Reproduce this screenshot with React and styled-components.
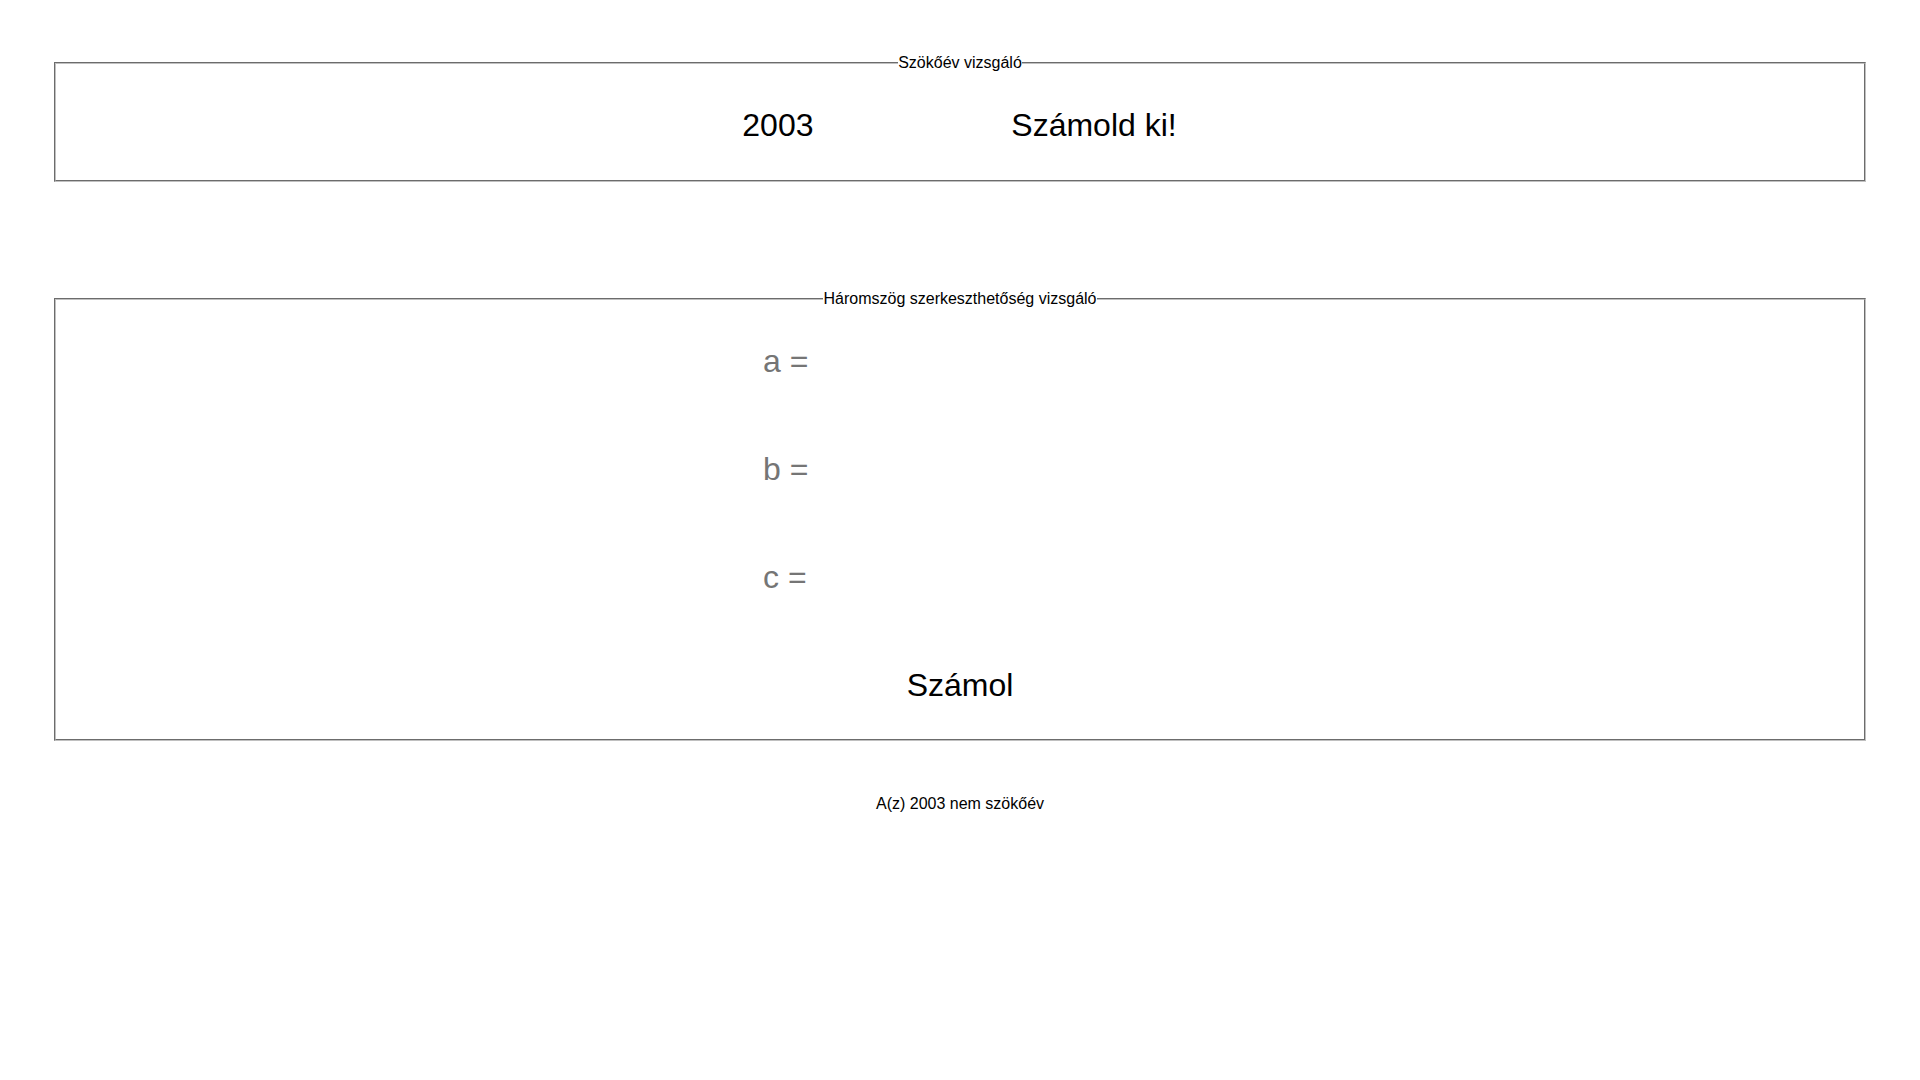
import React, { useState } from "react";
import styled, { createGlobalStyle } from "styled-components";

const Global = createGlobalStyle`
  html, body { margin: 0; padding: 0; background: #ffffff; }
  body { font-family: "Liberation Sans", Arial, sans-serif; color: #000; }
`;

const Page = styled.div`
  padding: 54px 54px 0;
  display: flex;
  flex-direction: column;
`;

const Box = styled.fieldset`
  margin: ${(p) => (p.$top ? `${p.$top}px 0 0` : "0")};
  padding: 0;
  min-width: 0;
  border: 2px groove rgb(192, 192, 192);
`;

const Legend = styled.legend`
  margin: 0 auto;
  padding: 0;
  font-size: 16px;
  line-height: 18px;
  font-family: "Liberation Sans", Arial, sans-serif;
`;

const Row = styled.div`
  box-sizing: border-box;
  height: 108px;
  padding-bottom: 2px;
  display: flex;
  align-items: center;
  justify-content: center;
`;

const Column = styled.div`
  display: flex;
  flex-direction: column;
  align-items: center;
  gap: 71px;
  padding: 35px 0 35px;
`;

const Field = styled.input`
  box-sizing: border-box;
  width: ${(p) => p.$w}px;
  height: 37px;
  padding: 0 ${(p) => p.$pad}px;
  border: none;
  outline: none;
  background: transparent;
  font-family: "Liberation Sans", Arial, sans-serif;
  font-size: 32px;
  color: #000;
  &::placeholder { color: #757575; }
`;

const Action = styled.button`
  height: 37px;
  padding: 0 6px;
  border: none;
  background: transparent;
  font-family: "Liberation Sans", Arial, sans-serif;
  font-size: 32px;
  color: #000;
  cursor: pointer;
`;

const Result = styled.p`
  margin: 54px 0 0;
  text-align: center;
  font-size: 16px;
  line-height: 18px;
`;

export default function App() {
  const [year, setYear] = useState("2003");
  const [a, setA] = useState("");
  const [b, setB] = useState("");
  const [c, setC] = useState("");
  const [msg, setMsg] = useState("A(z) 2003 nem szökőév");

  const checkYear = () => {
    const y = parseInt(year, 10);
    const leap = (y % 4 === 0 && y % 100 !== 0) || y % 400 === 0;
    setMsg(`A(z) ${year} ${leap ? "szökőév" : "nem szökőév"}`);
  };

  const checkTriangle = () => {
    const x = +a, y = +b, z = +c;
    const ok = x + y > z && x + z > y && y + z > x && x > 0 && y > 0 && z > 0;
    setMsg(ok ? "A háromszög megszerkeszthető" : "A háromszög nem szerkeszthető meg");
  };

  return (
    <Page>
      <Global />
      <Box>
        <Legend>Szökőév vizsgáló</Legend>
        <Row>
          <Field $w={268} $pad={5} value={year} onChange={(e) => setYear(e.target.value)} />
          <Action onClick={checkYear}>Számold ki!</Action>
        </Row>
      </Box>
      <Box $top={108}>
        <Legend>Háromszög szerkeszthetőség vizsgáló</Legend>
        <Column>
          <Field $w={400} $pad={3} placeholder="a =" value={a} onChange={(e) => setA(e.target.value)} />
          <Field $w={400} $pad={3} placeholder="b =" value={b} onChange={(e) => setB(e.target.value)} />
          <Field $w={400} $pad={3} placeholder="c =" value={c} onChange={(e) => setC(e.target.value)} />
          <Action onClick={checkTriangle}>Számol</Action>
        </Column>
      </Box>
      <Result>{msg}</Result>
    </Page>
  );
}
